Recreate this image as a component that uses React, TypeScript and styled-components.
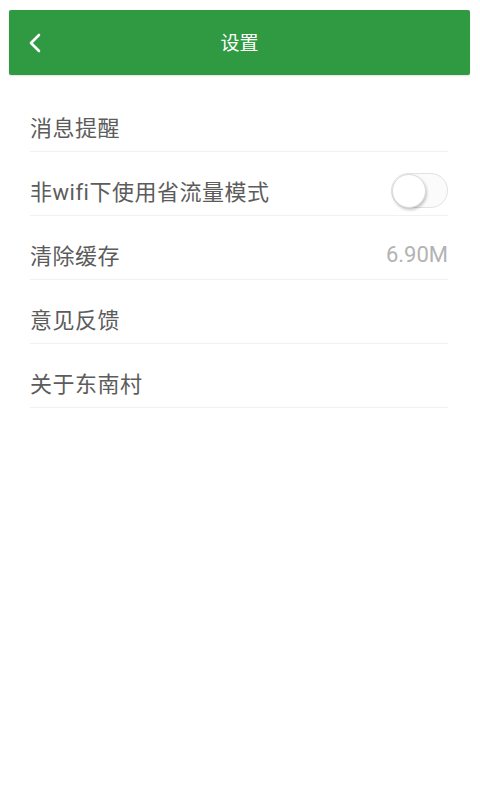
import React, { useState } from "react";
import styled, { createGlobalStyle } from "styled-components";

const GlobalStyle = createGlobalStyle`
  html, body { margin: 0; padding: 0; background: #ffffff; }
  body {
    font-family: "Roboto", "Noto Sans CJK SC", "Noto Sans", sans-serif;
    -webkit-font-smoothing: antialiased;
  }
`;

const Page = styled.div`
  width: 480px;
  min-height: 800px;
  background: #ffffff;
  padding-top: 10px;
  box-sizing: border-box;
`;

const Header = styled.header`
  margin: 0 10px 0 9px;
  height: 65px;
  background: #2f9a41;
  border-radius: 2px;
  box-shadow: 0 1px 2px rgba(0, 0, 0, 0.12);
  display: grid;
  grid-template-columns: 60px 1fr 60px;
  align-items: center;
`;

const BackButton = styled.button`
  background: none;
  border: none;
  padding: 0 0 0 19px;
  height: 100%;
  display: flex;
  align-items: center;
  cursor: pointer;
`;

const Title = styled.h1`
  margin: 0;
  text-align: center;
  color: #ffffff;
  font-size: 19px;
  font-weight: 400;
  font-family: "Noto Sans CJK SC", sans-serif;
  padding-bottom: 2px;
`;

const List = styled.ul`
  list-style: none;
  margin: 13px 32px 0 30px;
  padding: 0;
`;

const Row = styled.li`
  height: 64px;
  padding-top: 13px;
  display: flex;
  align-items: center;
  justify-content: space-between;
  border-bottom: 1px solid #f1f1f1;
  box-sizing: border-box;
`;

const Label = styled.span`
  font-size: 22px;
  color: #5c5c5c;
  font-family: "Roboto", "Noto Sans CJK SC", sans-serif;
  letter-spacing: 0.5px;
`;

const Value = styled.span`
  font-size: 22px;
  color: #b3b3b3;
  font-family: "Roboto", sans-serif;
`;

const Switch = styled.button<{ $on: boolean }>`
  width: 57px;
  height: 35px;
  border-radius: 18px;
  border: 1px solid #e2e2e2;
  background: ${(p) => (p.$on ? "#2f9a41" : "#fbfbfb")};
  padding: 0;
  position: relative;
  cursor: pointer;
  box-sizing: border-box;
  margin-top: 1px;
`;

const Knob = styled.span<{ $on: boolean }>`
  position: absolute;
  top: 0px;
  left: ${(p) => (p.$on ? "23px" : "0px")};
  width: 32px;
  height: 32px;
  border-radius: 50%;
  background: #ffffff;
  border: 1px solid #dcdcdc;
  box-shadow: 1px 2px 3px rgba(0, 0, 0, 0.22);
  transition: left 0.2s;
`;

export default function App() {
  const [saveData, setSaveData] = useState(false);
  return (
    <>
      <GlobalStyle />
      <Page>
        <Header>
          <BackButton aria-label="返回">
            <svg width="14" height="20" viewBox="0 0 14 20">
              <path
                d="M11 2 L3 10 L11 18"
                fill="none"
                stroke="#ffffff"
                strokeWidth="2.6"
                strokeLinecap="round"
                strokeLinejoin="round"
              />
            </svg>
          </BackButton>
          <Title>设置</Title>
          <div />
        </Header>
        <List>
          <Row>
            <Label>消息提醒</Label>
          </Row>
          <Row>
            <Label>非wifi下使用省流量模式</Label>
            <Switch $on={saveData} onClick={() => setSaveData(!saveData)}>
              <Knob $on={saveData} />
            </Switch>
          </Row>
          <Row>
            <Label>清除缓存</Label>
            <Value>6.90M</Value>
          </Row>
          <Row>
            <Label>意见反馈</Label>
          </Row>
          <Row>
            <Label>关于东南村</Label>
          </Row>
        </List>
      </Page>
    </>
  );
}
